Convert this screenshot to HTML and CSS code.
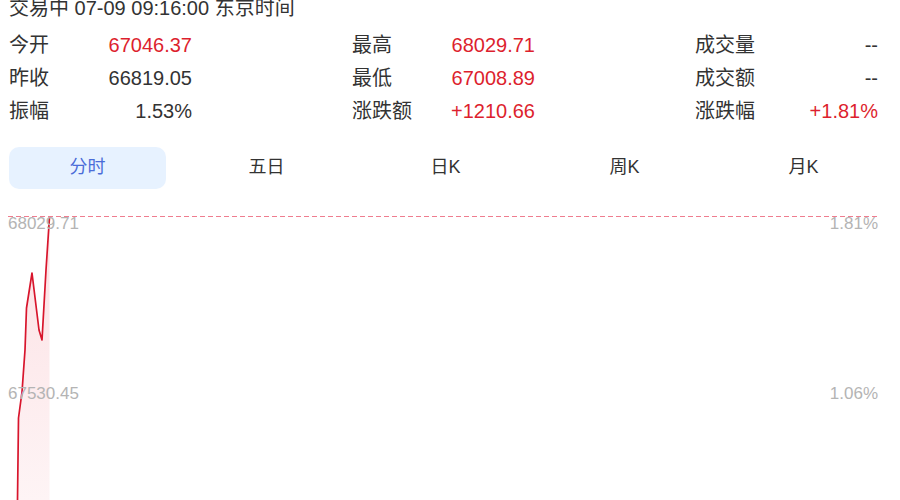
FILE: index.html
```html
<!DOCTYPE html>
<html lang="zh-CN">
<head>
  <meta charset="UTF-8">
  <title>行情</title>
  <meta name="viewport" content="width=device-width, initial-scale=1.0" />
  <link rel="stylesheet" href="styles.css">
</head>
<body>

<div class="quote">
  <div class="status">交易中 07-09 09:16:00 东京时间</div>

  <div class="stats">
    <div class="col">
      <div class="cell"><span class="label">今开</span><span class="value up">67046.37</span></div>
      <div class="cell"><span class="label">昨收</span><span class="value">66819.05</span></div>
      <div class="cell"><span class="label">振幅</span><span class="value">1.53%</span></div>
    </div>
    <div class="col">
      <div class="cell"><span class="label">最高</span><span class="value up">68029.71</span></div>
      <div class="cell"><span class="label">最低</span><span class="value up">67008.89</span></div>
      <div class="cell"><span class="label">涨跌额</span><span class="value up">+1210.66</span></div>
    </div>
    <div class="col">
      <div class="cell"><span class="label">成交量</span><span class="value">--</span></div>
      <div class="cell"><span class="label">成交额</span><span class="value">--</span></div>
      <div class="cell"><span class="label">涨跌幅</span><span class="value up">+1.81%</span></div>
    </div>
  </div>

  <div class="tabs">
    <div class="tab active">分时</div>
    <div class="tab">五日</div>
    <div class="tab">日K</div>
    <div class="tab">周K</div>
    <div class="tab">月K</div>
  </div>

  <div class="chart">
    <svg width="900" height="290" viewBox="0 0 900 290">
      <defs>
        <linearGradient id="areaFill" x1="0" y1="0" x2="0" y2="1">
          <stop offset="0" stop-color="#e8243a" stop-opacity="0.14"/>
          <stop offset="1" stop-color="#e8243a" stop-opacity="0.05"/>
        </linearGradient>
      </defs>

      <!-- day high reference -->
      <line x1="8" y1="6.5" x2="878" y2="6.5" stroke="#ef7d8f" stroke-width="1" stroke-dasharray="5 3"/>

      <!-- price area + line -->
      <path d="M17.5 290 L18.5 208 L22 182 L25 140 L26.5 98 L32 63 L39 120 L42 130 L46 60 L49.5 7 L49.5 290 Z" fill="url(#areaFill)"/>
      <polyline points="17.5,290 18.5,208 22,182 25,140 26.5,98 32,63 39,120 42,130 46,60 49.5,7"
                fill="none" stroke="#d8152c" stroke-width="1.7" stroke-linejoin="round"/>

      <!-- axis labels -->
      <text class="axis" x="8" y="19">68029.71</text>
      <text class="axis" x="878" y="19" text-anchor="end">1.81%</text>
      <text class="axis" x="8" y="189">67530.45</text>
      <text class="axis" x="878" y="189" text-anchor="end">1.06%</text>
    </svg>
  </div>
</div>

</body>
</html>
```

FILE: styles.css
```css
/* ============================
   Base
============================ */
* {
  box-sizing: border-box;
}

body {
  margin: 0;
  background: #fff;
  color: #333;
  font-family: "Liberation Sans", Arial, "Noto Sans CJK SC", sans-serif;
  overflow: hidden;
}

.quote {
  width: 900px;
}

/* ============================
   Header status line
============================ */
.status {
  margin-top: -4px;
  padding-left: 9px;
  height: 24px;
  line-height: 24px;
  font-size: 20px;
}

/* ============================
   Stats grid
============================ */
.stats {
  display: flex;
  justify-content: space-between;
  width: 878px;
  margin-top: 9px;
  padding-left: 9px;
}

.col {
  width: 183px;
}

.cell {
  display: flex;
  justify-content: space-between;
  height: 33px;
  line-height: 33px;
  font-size: 20px;
}

.value.up {
  color: #dd1f2e;
}

/* ============================
   Period tabs
============================ */
.tabs {
  display: flex;
  gap: 22px;
  margin-top: 19px;
  padding-left: 9px;
}

.tab {
  width: 157px;
  height: 42px;
  line-height: 40px;
  text-align: center;
  font-size: 18px;
  color: #333;
  border-radius: 10px;
}

.tab.active {
  background: #e7f2ff;
  color: #4a6cd8;
}

/* ============================
   Intraday chart
============================ */
.chart {
  margin-top: 21px;
  height: 290px;
}

.chart svg {
  display: block;
}

.axis {
  font-family: "Liberation Sans", Arial, sans-serif;
  font-size: 17px;
  fill: #b4b4b4;
}
```
